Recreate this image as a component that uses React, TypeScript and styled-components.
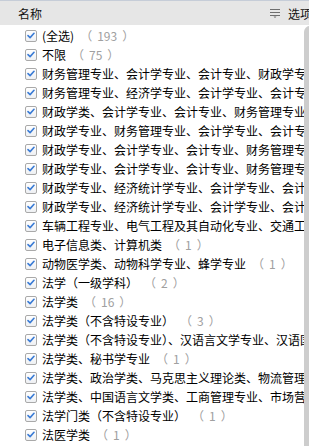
import React from "react";
import styled, { createGlobalStyle } from "styled-components";

const GlobalStyle = createGlobalStyle`
  html, body { margin: 0; padding: 0; background: #fff; }
  body {
    font-family: "Noto Sans CJK SC", "Noto Sans", sans-serif;
    font-size: 12px;
    color: #000;
  }
`;

const Panel = styled.div`
  width: 309px;
  height: 446px;
  overflow: hidden;
  display: flex;
  flex-direction: column;
  background: #fff;
`;

const Header = styled.div`
  flex: 0 0 24px;
  border-top: 1px solid #c6cdd8;
  background: #e6e6e6;
  display: flex;
  align-items: center;
  padding-left: 18px;
  overflow: hidden;
  white-space: nowrap;
`;

const Title = styled.span`
  font-size: 12px;
  color: #111;
`;

const Options = styled.div`
  margin-left: auto;
  margin-right: -3px;
  display: flex;
  align-items: center;
  gap: 7px;
  color: #111;
`;

const Body = styled.div`
  flex: 1;
  display: flex;
  min-height: 0;
`;

const List = styled.ul`
  list-style: none;
  margin: 0;
  padding: 1px 0 0 0;
  flex: 0 0 304px;
  overflow: hidden;
`;

const Row = styled.li`
  height: 19px;
  display: flex;
  align-items: center;
  padding-left: 25px;
  white-space: nowrap;
`;

const Box = styled.span`
  box-sizing: border-box;
  width: 12px;
  height: 12px;
  border: 1px solid #a9a9a9;
  border-radius: 2px;
  background: linear-gradient(#ffffff, #eef0f3);
  display: flex;
  align-items: center;
  justify-content: center;
  flex: 0 0 auto;
  margin-right: 5px;
`;

const Label = styled.span`
  line-height: 19px;
  color: #000;
`;

const Count = styled.span`
  margin-left: 6px;
  color: #a0a0a0;
`;

const Paren = styled.span<{ $side: "open" | "close" }>`
  margin: ${(p) => (p.$side === "open" ? "0 5px 0 0" : "0 0 0 5px")};
`;

const Scroll = styled.div`
  flex: 0 0 17px;
  margin-top: 1px;
  background: #cdcdcd;
  border-radius: 6px 0 0 0;
`;

const items: { label: string; count?: number }[] = [
  { label: "(全选)", count: 193 },
  { label: "不限", count: 75 },
  { label: "财务管理专业、会计学专业、会计专业、财政学专业、金融学专业", count: 1 },
  { label: "财务管理专业、经济学专业、会计学专业、会计专业、审计学专业", count: 1 },
  { label: "财政学类、会计学专业、会计专业、财务管理专业、审计学专业", count: 1 },
  { label: "财政学专业、财务管理专业、会计学专业、会计专业、金融学专业", count: 1 },
  { label: "财政学专业、会计学专业、会计专业、财务管理专业、审计学专业", count: 1 },
  { label: "财政学专业、会计学专业、会计专业、财务管理专业、金融学专业", count: 1 },
  { label: "财政学专业、经济统计学专业、会计学专业、会计专业、统计学专业", count: 1 },
  { label: "财政学专业、经济统计学专业、会计学专业、会计专业、财务管理专业", count: 1 },
  { label: "车辆工程专业、电气工程及其自动化专业、交通工程专业", count: 1 },
  { label: "电子信息类、计算机类", count: 1 },
  { label: "动物医学类、动物科学专业、蜂学专业", count: 1 },
  { label: "法学（一级学科）", count: 2 },
  { label: "法学类", count: 16 },
  { label: "法学类（不含特设专业）", count: 3 },
  { label: "法学类（不含特设专业）、汉语言文学专业、汉语国际教育专业", count: 1 },
  { label: "法学类、秘书学专业", count: 1 },
  { label: "法学类、政治学类、马克思主义理论类、物流管理专业", count: 1 },
  { label: "法学类、中国语言文学类、工商管理专业、市场营销专业", count: 1 },
  { label: "法学门类（不含特设专业）", count: 1 },
  { label: "法医学类", count: 1 },
];

const Check = () => (
  <svg width="8" height="7" viewBox="0 0 8 7" aria-hidden="true">
    <path d="M1 3.6 L3.1 5.6 L7 1.3" fill="none" stroke="#3a7bd5" strokeWidth="1.6" strokeLinecap="round" strokeLinejoin="round" />
  </svg>
);

const OptionsIcon = () => (
  <svg width="12" height="12" viewBox="0 0 12 12" aria-hidden="true">
    <path d="M1 2.5 H11 M1 5.5 H11 M1 8.5 H11" stroke="#6e6e6e" strokeWidth="1" />
    <path d="M4.5 9.5 L6 11 L7.5 9.5 Z" fill="#6e6e6e" />
  </svg>
);

export default function App() {
  return (
    <>
      <GlobalStyle />
      <Panel>
        <Header>
          <Title>名称</Title>
          <Options>
            <OptionsIcon />
            <span>选项</span>
          </Options>
        </Header>
        <Body>
          <List>
            {items.map((it, i) => (
              <Row key={i}>
                <Box>
                  <Check />
                </Box>
                <Label>{it.label}</Label>
                {it.count !== undefined && (
                  <Count>
                    <Paren $side="open">（</Paren>
                    {it.count}
                    <Paren $side="close">）</Paren>
                  </Count>
                )}
              </Row>
            ))}
          </List>
          <Scroll />
        </Body>
      </Panel>
    </>
  );
}
